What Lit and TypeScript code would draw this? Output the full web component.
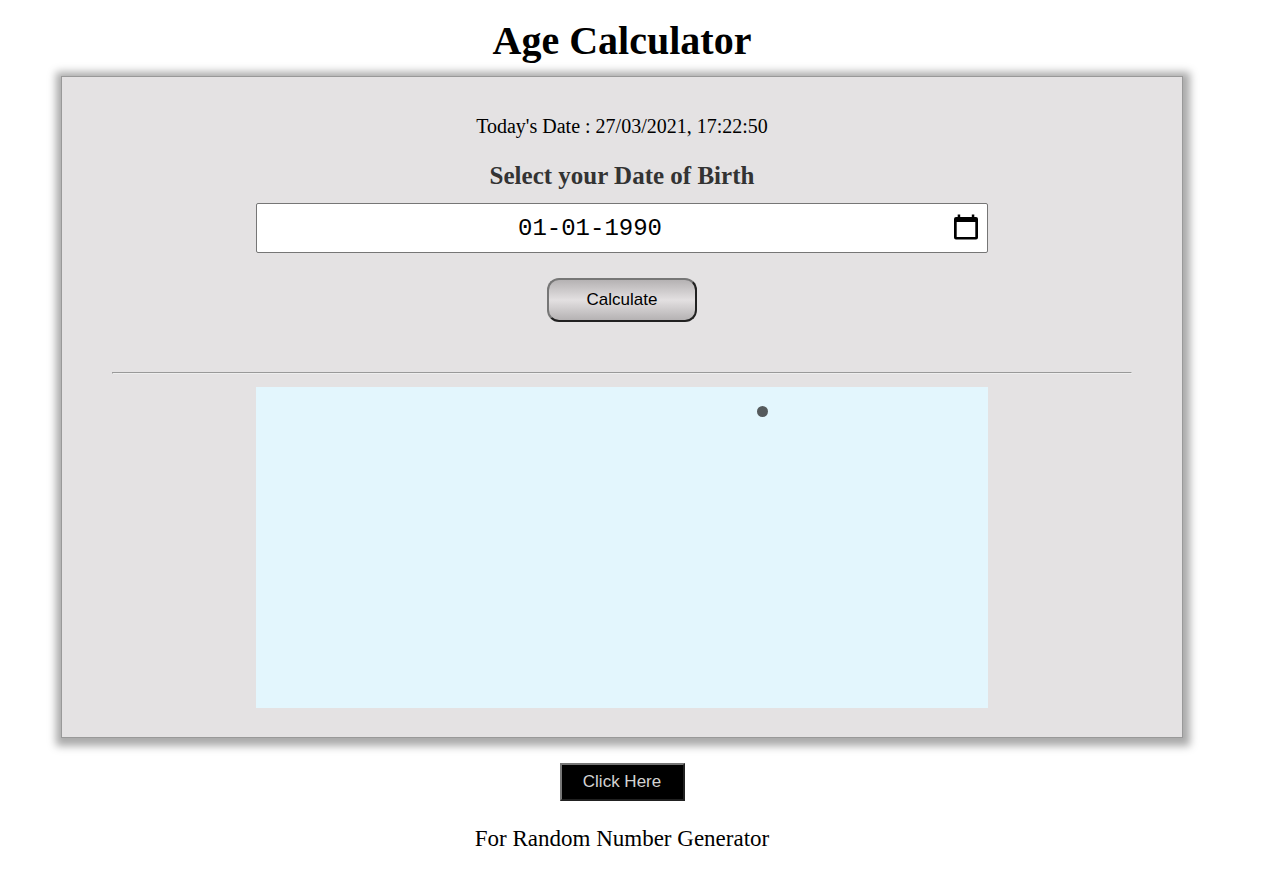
import { LitElement, html, css } from "lit";
import { customElement, property, state } from "lit/decorators.js";

@customElement("app-root")
export class AgeCalculator extends LitElement {
  @property() now = "27/03/2021, 17:22:50";
  @state() private birth = "01-01-1990";

  static styles = css`
    :host {
      display: block;
      padding: 18px 32px 0 0;
      font-family: "Liberation Serif", "Times New Roman", serif;
      color: #000;
      text-align: center;
    }
    h1 {
      margin: 0 0 12px;
      font-size: 40px;
      line-height: 46px;
    }
    .card {
      box-sizing: border-box;
      width: calc(90% + 2px);
      margin: 0 auto;
      padding: 37px 50px 29px;
      border: 1px solid #999;
      background: #e4e2e3;
      box-shadow: 1px 2px 8px 6px #aaa;
    }
    .today {
      margin: 0;
      font-size: 20px;
      line-height: 24px;
    }
    .label {
      display: block;
      margin: 23px 0 13px;
      font-size: 25px;
      font-weight: bold;
      line-height: 29px;
      color: #333;
    }
    .field {
      box-sizing: border-box;
      display: flex;
      align-items: center;
      height: 50px;
      margin: 0 144px;
      border: 1px solid #767676;
      border-radius: 2px;
      background: #fff;
    }
    .date {
      flex: 1;
      min-width: 0;
      padding: 2px 16px 0 0;
      border: 0;
      outline: 0;
      background: none;
      font: 24px/28px "Liberation Mono", "Courier New", monospace;
      color: #000;
      text-align: center;
    }
    .picker {
      display: flex;
      margin: 0;
      padding: 0 9px 2px 15px;
      border: 0;
      background: none;
    }
    .calculate {
      width: 150px;
      height: 44px;
      margin: 25px 0 50px;
      border: 2px solid;
      border-color: #767676 #212121 #212121 #767676;
      border-radius: 12px;
      background: linear-gradient(#b5b2b3, #e3e0e1 50%, #b5b2b3);
      font: 17px/20px "Liberation Sans", Arial, sans-serif;
      color: #000;
    }
    hr {
      margin: 0 0 13px;
      border: 1px solid;
      border-color: #999 #eee #eee #999;
    }
    .result {
      height: 321px;
      margin: 0 144px;
      background: #e3f6fd;
    }
    .dot {
      display: block;
      width: 11px;
      height: 11px;
      margin-left: calc(50% + 135px);
      position: relative;
      top: 19px;
      border-radius: 50%;
      background: #555a5c;
    }
    .link {
      width: 125px;
      height: 38px;
      margin: 25px 0 24px;
      border: 2px solid;
      border-color: #767676 #212121 #212121 #767676;
      background: #000;
      font: 17px/20px "Liberation Sans", Arial, sans-serif;
      color: #d3d3d3;
    }
    .caption {
      margin: 0;
      font-size: 23px;
      line-height: 28px;
    }
  `;

  render() {
    return html`
      <h1>Age Calculator</h1>
      <main class="card">
        <p class="today">Today's Date : ${this.now}</p>
        <label class="label" for="birth">Select your Date of Birth</label>
        <div class="field">
          <input
            class="date"
            id="birth"
            type="text"
            .value=${this.birth}
            @input=${(e: Event) => (this.birth = (e.target as HTMLInputElement).value)}
          />
          <button class="picker" aria-label="Show date picker">
            <svg width="24" height="26" viewBox="0 0 24 26">
              <path
                fill="#000"
                fill-rule="evenodd"
                d="M3.700 0.500h2.500v2.500h11.600v-2.500h2.500v2.500H22a2 2 0 0 1 2 2V23.500a2 2 0 0 1-2 2H2a2 2 0 0 1-2-2V5a2 2 0 0 1 2-2h1.700zM2.700 8V23H21.300V8z"
              />
            </svg>
          </button>
        </div>
        <button class="calculate">Calculate</button>
        <hr />
        <section class="result"><span class="dot"></span></section>
      </main>
      <button class="link">Click Here</button>
      <p class="caption">For Random Number Generator</p>
    `;
  }
}
